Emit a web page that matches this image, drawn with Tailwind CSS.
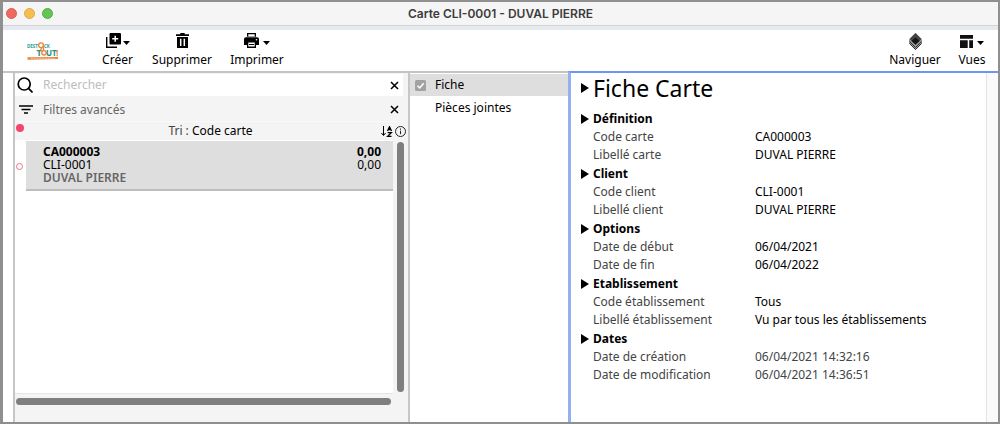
<!DOCTYPE html>
<html lang="fr">
<head>
<meta charset="utf-8">
<meta name="viewport" content="width=device-width, initial-scale=1">
<title>Carte CLI-0001 - DUVAL PIERRE</title>
<script src="https://cdn.jsdelivr.net/npm/@tailwindcss/browser@4"></script>
</head>
<body class="h-screen overflow-hidden bg-[#8f8f8f] pt-0.5 pr-0.5 pb-0.5 pl-[3px] font-['Noto_Sans','Open_Sans',sans-serif] text-xs text-black">
<div class="flex h-full flex-col bg-white">

  <!-- Title bar -->
  <header class="grid h-6 shrink-0 grid-cols-[1fr_auto_1fr] items-center border-b border-[#d3d3d3] bg-[#f5f5f5] px-[3px]">
    <div class="flex gap-[7px]">
      <button aria-label="Fermer" class="size-[11px] rounded-full border border-[#dc5c52] bg-[#ed6a5e]"></button>
      <button aria-label="Réduire" class="size-[11px] rounded-full border border-[#dfaa42] bg-[#f5bf4f]"></button>
      <button aria-label="Agrandir" class="size-[11px] rounded-full border border-[#55ad45] bg-[#62c554]"></button>
    </div>
    <h1 class="font-['Inter',sans-serif] text-xs font-semibold text-[#3c3c3c]">Carte CLI-0001 - DUVAL PIERRE</h1>
  </header>
  <div class="h-1 shrink-0 bg-[#e5e9f0]"></div>

  <!-- Toolbar -->
  <nav class="flex h-[43px] shrink-0 items-center border-b-2 border-[#c4c4c4] pr-2.5 pl-6">
    <svg class="mr-10 h-[18px] w-8" viewBox="0 0 32 18" role="img" aria-label="Destock Tout">
      <g font-family="Open Sans, sans-serif" font-weight="700">
        <text x="0" y="5.600" font-size="4.500" fill="#2b9c92">DEST</text>
        <text x="17" y="5.600" font-size="4.500" fill="#2b9c92">CK</text>
        <text x="9.500" y="13.600" font-size="9" fill="#17948a">T</text>
        <text x="19" y="13.600" font-size="8" fill="#17948a">UT</text>
        <text x="29" y="13.600" font-size="8" fill="#e8833a">!</text>
      </g>
      <g fill="none" stroke="#e8833a" stroke-width="1.300">
        <circle cx="14" cy="3.200" r="2.400"/><circle cx="17" cy="10.800" r="2.200"/><path d="M15 5.500l-1.500 2.500 2 1M16.500 4v4"/>
      </g>
      <path d="M.5 15.300L31 14.900v2.200l-30.500.6z" fill="#e8833a"/>
      <path d="M4 16.300h24" stroke="#fbe0c9" stroke-width=".7" stroke-dasharray="2 .8"/>
    </svg>

    <button class="flex w-[37px] flex-col items-center">
      <span class="flex items-center gap-0.5">
        <svg class="size-[15px]" viewBox="0 0 15 15"><path d="M4.500 0H14a1 1 0 0 1 1 1v9.500a1 1 0 0 1-1 1H4.500a1 1 0 0 1-1-1V1a1 1 0 0 1 1-1z"/><path d="M.7 4v10.300H11" fill="none" stroke="#000" stroke-width="1.400"/><path d="M9.200 2.800v6M6.200 5.800h6" stroke="#fff" stroke-width="1.500"/></svg>
        <svg class="mt-1 h-1 w-[7px]" viewBox="0 0 7 4"><path d="M0 0h7L3.500 4z"/></svg>
      </span>
      <span class="mt-[3px] leading-[17px]">Créer</span>
    </button>
    <button class="ml-3 flex w-[68px] flex-col items-center">
      <svg class="h-[15px] w-[13px]" viewBox="0 0 13 15"><path d="M4.300 0h4.400v1.300H13v1.700H0V1.300h4.300zM1 4h11v11H1z"/><path d="M4.700 5.800v7.200M8.300 5.800v7.200" stroke="#fff" stroke-width="1.500"/></svg>
      <span class="mt-[3px] leading-[17px]">Supprimer</span>
    </button>
    <button class="ml-[9px] flex w-16 flex-col items-center">
      <span class="flex items-center gap-1">
        <svg class="size-[15px]" viewBox="0 0 15 15"><path d="M3 0h9v3.800H3zM2 4.200h11a2 2 0 0 1 2 2V12H0V6.200a2 2 0 0 1 2-2zM3 10h9v5H3z"/><path d="M4.300 1.300h6.400v2.200H4.300zM4.300 9.500h6.400v4H4.300z" fill="#fff"/><path d="M5 11.500h5" stroke="#000"/><circle cx="12.500" cy="6.800" r=".8" fill="#fff"/></svg>
        <svg class="mt-1 h-1 w-[7px]" viewBox="0 0 7 4"><path d="M0 0h7L3.500 4z"/></svg>
      </span>
      <span class="mt-[3px] leading-[17px]">Imprimer</span>
    </button>

    <button class="ml-auto flex w-14 flex-col items-center">
      <svg class="h-[17px] w-[13px]" viewBox="0 0 13 17"><path d="M6.500 0L13 6.500v4L6.500 17 0 10.500v-4z" fill="#999"/><path d="M6.500 0l6 6-6 6-6-6z" fill="#444"/><path d="M.5 8.500l6 6 6-6M.5 10.500l6 6 6-6" fill="none" stroke="#333" stroke-width="1"/><path d="M6.500 4.500l4 3.500-4 3.500-4-3.500z" fill="#151515"/></svg>
      <span class="mt-px leading-[17px]">Naviguer</span>
    </button>
    <button class="ml-[13px] flex w-8 flex-col items-center">
      <span class="flex items-center gap-1">
        <svg class="h-[15px] w-[13px]" viewBox="0 0 13 15"><path d="M0 2h13v3.800H0zM0 7.300h7.700V15H0zM9.200 7.300H13V15H9.200z" fill="#111"/></svg>
        <svg class="mt-1 h-1 w-[7px]" viewBox="0 0 7 4"><path d="M0 0h7L3.500 4z"/></svg>
      </span>
      <span class="mt-[3px] leading-[17px]">Vues</span>
    </button>
  </nav>

  <main class="flex min-h-0 flex-1">
    <!-- Card list -->
    <section class="ml-2.5 flex w-[395px] shrink-0 flex-col border-l-2 border-[#c6c6c6] bg-[#f4f4f4]">
      <div class="mt-px mr-[5px] flex h-[22px] items-center bg-white pr-1 pl-0.5">
        <svg class="size-4 shrink-0" viewBox="0 0 16 16" fill="none" stroke="#000" stroke-width="1.700"><circle cx="7.200" cy="7" r="6"/><path d="M11.500 11.300L15.500 15.500"/></svg>
        <input type="search" aria-label="Rechercher" placeholder="Rechercher" class="ml-[10px] min-w-0 flex-1 bg-transparent outline-none placeholder:text-[#bdbdbd]">
        <button aria-label="Effacer la recherche"><svg class="size-[9px]" viewBox="0 0 9 9"><path d="M1 1l7 7M8 1L1 8" stroke="#000" stroke-width="1.500"/></svg></button>
      </div>
      <div class="mr-[5px] flex h-[26px] items-center border-b border-[#fafafa] pt-0.5 pr-1 pl-1">
        <svg class="h-[9px] w-[14px]" viewBox="0 0 14 9"><path d="M0 .9h14M2.500 4.500h9M5 8.100h4" stroke="#000" stroke-width="1.500"/></svg>
        <button class="ml-[10px] flex-1 text-left text-[#666]">Filtres avancés</button>
        <button aria-label="Effacer les filtres"><svg class="size-[9px]" viewBox="0 0 9 9"><path d="M1 1l7 7M8 1L1 8" stroke="#000" stroke-width="1.500"/></svg></button>
      </div>
      <div class="flex h-[18px] items-center pr-0.5">
        <span class="mb-1.5 ml-px size-2 rounded-full bg-[#f0476b]"></span>
        <span class="flex-1 pl-4 text-center leading-[18px]"><span class="text-[#444]">Tri :</span> Code carte</span>
        <button aria-label="Trier" class="mr-0.5"><svg class="h-[11px] w-3" viewBox="0 0 12 11"><path d="M2.500 0v9M.4 7l2.100 2.500L4.600 7" fill="none" stroke="#000"/><path d="M6.500 5L8.500.8l2 4.200M7.300 3.600h2.400M6.700 6.700h3.600L6.700 10.300h3.800" fill="none" stroke="#000" stroke-width="1.300"/></svg></button>
        <button aria-label="Informations"><svg class="size-[11px]" viewBox="0 0 11 11" fill="none" stroke="#222"><circle cx="5.500" cy="5.500" r="5"/><path d="M5.500 4.700v3.500M5.500 2.500v1.200"/></svg></button>
      </div>

      <div class="flex min-h-0 flex-1">
        <div class="flex-1 border-b border-[#e5e5e5] bg-white pt-px">
          <button class="flex w-full items-center gap-[3px] text-left">
            <span class="ml-px size-[7px] shrink-0 rounded-full border border-[#f0708c]"></span>
            <span class="grid h-[50px] flex-1 grid-cols-[1fr_auto] content-start border-b-2 border-[#bdbdbd] bg-[#dedede] pt-1 pr-3 pl-[17px] leading-[13px]">
              <b>CA000003</b><b class="text-right">0,00</b>
              <span>CLI-0001</span><span class="text-right">0,00</span>
              <span class="font-semibold text-[#666]">DUVAL PIERRE</span>
            </span>
          </button>
        </div>
        <div class="w-[15px] px-1 pt-0.5 pb-0.5"><div class="h-full w-[7px] rounded-full bg-[#7f7f7f]"></div></div>
      </div>
      <div class="mt-1 mr-[17px] ml-px h-[7px] rounded-full bg-[#7f7f7f]"></div>
      <div class="h-[17px] shrink-0"></div>
    </section>

    <!-- Tabs -->
    <aside class="w-[160px] shrink-0 border-l-2 border-[#c6c6c6] pt-px">
      <label class="flex h-[22px] items-center bg-[#dedede] pl-[5px]">
        <input type="checkbox" checked disabled class="peer sr-only">
        <svg class="size-[11px]" viewBox="0 0 11 11"><rect width="11" height="11" rx="1.500" fill="#a2a2a2"/><path d="M2.500 5.700l2.200 2.200 4-4.700" fill="none" stroke="#fff" stroke-width="1.500"/></svg>
        <span class="ml-[9px]">Fiche</span>
      </label>
      <button class="block h-[23px] w-full pl-[25px] text-left">Pièces jointes</button>
    </aside>

    <!-- Record details -->
    <article class="-mt-[2px] flex min-w-0 flex-1 border-t-2 border-l-[3px] border-[#6f96ee] border-l-[#93b0f3]">
      <div class="flex-1 pl-2.5">
        <h2><button class="flex h-[30px] items-center gap-1 text-[23px]"><svg class="h-2.5 w-2" viewBox="0 0 8 10"><path d="M0 0l8 5-8 5z"/></svg>Fiche Carte</button></h2>

        <div class="mt-1.5 grid grid-cols-[162px_1fr] pl-3 leading-[18px] text-black">
          <h3 class="col-span-2 -ml-3 h-[19px] pt-px"><button class="flex items-center gap-1 font-bold"><svg class="h-2.5 w-2" viewBox="0 0 8 10"><path d="M0 0l8 5-8 5z"/></svg>Définition</button></h3>
          <span class="text-[#444]">Code carte</span><span>CA000003</span>
          <span class="text-[#444]">Libellé carte</span><span>DUVAL PIERRE</span>

          <h3 class="col-span-2 -ml-3 h-[19px] pt-px"><button class="flex items-center gap-1 font-bold"><svg class="h-2.5 w-2" viewBox="0 0 8 10"><path d="M0 0l8 5-8 5z"/></svg>Client</button></h3>
          <span class="text-[#444]">Code client</span><span>CLI-0001</span>
          <span class="text-[#444]">Libellé client</span><span>DUVAL PIERRE</span>

          <h3 class="col-span-2 -ml-3 h-[19px] pt-px"><button class="flex items-center gap-1 font-bold"><svg class="h-2.5 w-2" viewBox="0 0 8 10"><path d="M0 0l8 5-8 5z"/></svg>Options</button></h3>
          <span class="text-[#444]">Date de début</span><span>06/04/2021</span>
          <span class="text-[#444]">Date de fin</span><span>06/04/2022</span>

          <h3 class="col-span-2 -ml-3 h-[19px] pt-px"><button class="flex items-center gap-1 font-bold"><svg class="h-2.5 w-2" viewBox="0 0 8 10"><path d="M0 0l8 5-8 5z"/></svg>Etablissement</button></h3>
          <span class="text-[#444]">Code établissement</span><span>Tous</span>
          <span class="text-[#444]">Libellé établissement</span><span>Vu par tous les établissements</span>

          <h3 class="col-span-2 -ml-3 h-[19px] pt-px"><button class="flex items-center gap-1 font-bold"><svg class="h-2.5 w-2" viewBox="0 0 8 10"><path d="M0 0l8 5-8 5z"/></svg>Dates</button></h3>
          <span class="text-[#444]">Date de création</span><span class="text-[#444]">06/04/2021 14:32:16</span>
          <span class="text-[#444]">Date de modification</span><span class="text-[#444]">06/04/2021 14:36:51</span>
        </div>
      </div>
      <div class="w-3 border-l border-[#e4e4e4] bg-[#fafafa]"></div>
    </article>
  </main>
</div>
</body>
</html>
